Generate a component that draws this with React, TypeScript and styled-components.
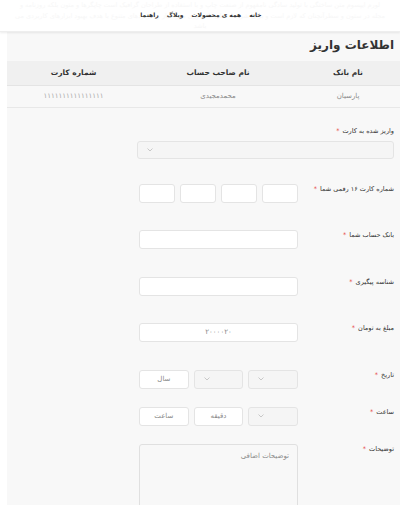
import styled, { createGlobalStyle } from 'styled-components';

const GlobalStyle = createGlobalStyle`
  body {
    margin: 0;
    background: #ffffff;
    font-family: Tahoma, "DejaVu Sans", "Noto Sans", sans-serif;
  }
  * { box-sizing: border-box; }
`;

const Header = styled.header`
  height: 32px;
  display: grid;
  background: #fff;
  box-shadow: 0 1px 2px rgba(0, 0, 0, 0.08);
  border-bottom: 1px solid #eeeeee;
  position: relative;
  z-index: 1;
`;

// very faint text sitting behind the menu
const GhostText = styled.p`
  grid-area: 1 / 1;
  margin: 0;
  padding: 0 14px;
  font-size: 6.5px;
  line-height: 10.5px;
  color: #f7f7f7;
  text-align: center;
  direction: rtl;
  overflow: hidden;
`;

const Nav = styled.nav`
  grid-area: 1 / 1;
  display: flex;
  justify-content: center;
  align-items: center;
  direction: rtl;
  gap: 8px;
  padding-left: 2px;
  margin-top: -3px;
`;

const NavLink = styled.a`
  font-size: 6px;
  font-weight: bold;
  color: #333;
  text-decoration: none;
`;

const Panel = styled.main`
  margin-left: 7px;
  background: #f8f8f8;
  direction: rtl;
  min-height: 473px;
`;

const Title = styled.h2`
  margin: 0;
  padding: 6px 6px 0 0;
  height: 29px;
  font-size: 12px;
  font-weight: bold;
  color: #333;
`;

const Table = styled.table`
  width: 100%;
  border-collapse: collapse;
  font-size: 7.5px;
`;

const Th = styled.th<{ w?: number }>`
  background: #f0f0f0;
  height: 24px;
  font-weight: bold;
  color: #333;
  text-align: center;
  border-bottom: 1px solid #e4e4e4;
  width: ${(p) => (p.w ? `${p.w}px` : 'auto')};
`;

const Td = styled.td<{ faint?: boolean }>`
  height: 22px;
  color: ${(p) => (p.faint ? '#aaa' : '#888')};
  text-align: center;
  font-size: 7px;
  border-bottom: 1px solid #e8e8e8;
`;

const Form = styled.div`
  padding: 18px 6px 0 0;
`;

const Label = styled.label`
  display: block;
  font-size: 6.5px;
  line-height: 10px;
  color: #333;
  white-space: nowrap;
`;

const Star = styled.span`
  color: #e53935;
  margin-right: 3px;
`;

const Stacked = styled.div`
  display: flex;
  flex-direction: column;
  gap: 5px;
`;

const Row = styled.div<{ space: number }>`
  display: flex;
  align-items: flex-start;
  margin-top: ${(p) => p.space}px;
`;

const LabelCell = styled.div`
  width: 96px;
`;

const Field = styled.div`
  width: 159px;
  display: grid;
  grid-auto-flow: column;
  grid-auto-columns: minmax(0, 1fr);
  gap: 5px;
`;

const Box = styled.div<{ muted?: boolean }>`
  height: 19px;
  border: 1px solid #e4e4e4;
  border-radius: 3px;
  background: ${(p) => (p.muted ? '#f5f5f5' : '#ffffff')};
  display: flex;
  align-items: center;
  justify-content: center;
  font-size: 7px;
  color: #888;
`;

const SelectBox = styled(Box)`
  justify-content: flex-end;
  padding-left: 9px;
`;

const WideSelect = styled(SelectBox)`
  width: 257px;
  height: 18px;
`;

const TextArea = styled.div`
  width: 159px;
  height: 80px;
  border: 1px solid #e0e0e0;
  border-radius: 3px;
  background: #f8f8f8;
  font-size: 7px;
  color: #888;
  padding: 7px 8px;
`;

const Chevron = () => (
  <svg width="6" height="4" viewBox="0 0 6 4">
    <path d="M0.5 0.5 L3 3 L5.5 0.5" fill="none" stroke="#bdbdbd" strokeWidth="0.8" />
  </svg>
);

const Req = ({ text }: { text: string }) => (
  <Label>
    {text}
    <Star>*</Star>
  </Label>
);

const App = () => {
  return (
    <>
      <GlobalStyle />
      <Header>
        <GhostText>
          لورم ایپسوم متن ساختگی با تولید سادگی نامفهوم از صنعت چاپ و با استفاده از طراحان گرافیک است چاپگرها و متون بلکه روزنامه و مجله در ستون و سطرآنچنان که لازم است و برای شرایط فعلی تکنولوژی مورد نیاز و کاربردهای متنوع با هدف بهبود ابزارهای کاربردی می باشد
        </GhostText>
        <Nav>
          <NavLink href="#">خانه</NavLink>
          <NavLink href="#">همه ی محصولات</NavLink>
          <NavLink href="#">وبلاگ</NavLink>
          <NavLink href="#">راهنما</NavLink>
        </Nav>
      </Header>
      <Panel>
        <Title>اطلاعات واریز</Title>
        <Table>
          <thead>
            <tr>
              <Th w={104}>نام بانک</Th>
              <Th w={156}>نام صاحب حساب</Th>
              <Th>شماره کارت</Th>
            </tr>
          </thead>
          <tbody>
            <tr>
              <Td>پارسیان</Td>
              <Td>محمدمجیدی</Td>
              <Td faint>۱۱۱۱۱۱۱۱۱۱۱۱۱۱۱۱</Td>
            </tr>
          </tbody>
        </Table>
        <Form>
          <Stacked>
            <Req text="واریز شده به کارت" />
            <WideSelect muted>
              <Chevron />
            </WideSelect>
          </Stacked>
          <Row space={25}>
            <LabelCell>
              <Req text="شماره کارت ۱۶ رقمی شما" />
            </LabelCell>
            <Field>
              <Box />
              <Box />
              <Box />
              <Box />
            </Field>
          </Row>
          <Row space={27}>
            <LabelCell>
              <Req text="بانک حساب شما" />
            </LabelCell>
            <Field>
              <Box />
            </Field>
          </Row>
          <Row space={28}>
            <LabelCell>
              <Req text="شناسه پیگیری" />
            </LabelCell>
            <Field>
              <Box />
            </Field>
          </Row>
          <Row space={27}>
            <LabelCell>
              <Req text="مبلغ به تومان" />
            </LabelCell>
            <Field>
              <Box>۲۰۰۰۰۲۰</Box>
            </Field>
          </Row>
          <Row space={28}>
            <LabelCell>
              <Req text="تاریخ" />
            </LabelCell>
            <Field>
              <SelectBox muted>
                <Chevron />
              </SelectBox>
              <SelectBox muted>
                <Chevron />
              </SelectBox>
              <Box>سال</Box>
            </Field>
          </Row>
          <Row space={18}>
            <LabelCell>
              <Req text="ساعت" />
            </LabelCell>
            <Field>
              <SelectBox muted>
                <Chevron />
              </SelectBox>
              <Box>دقیقه</Box>
              <Box>ساعت</Box>
            </Field>
          </Row>
          <Row space={18}>
            <LabelCell>
              <Req text="توضیحات" />
            </LabelCell>
            <TextArea>توضیحات اضافی</TextArea>
          </Row>
        </Form>
      </Panel>
    </>
  );
};

export default App;
